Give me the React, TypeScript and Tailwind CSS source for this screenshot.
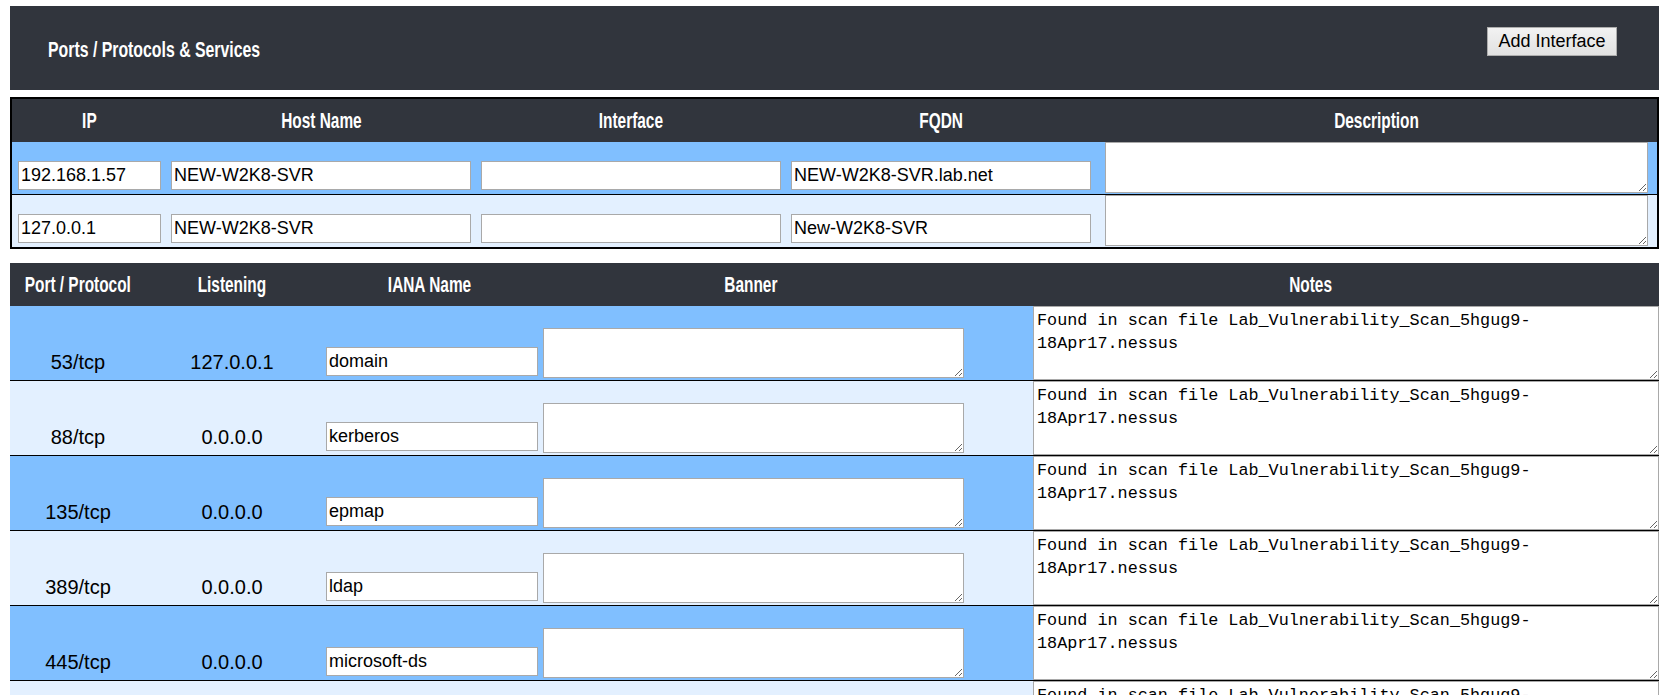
import React from "react";

const ARIAL = "font-['Liberation_Sans',Arial,sans-serif]";

const interfaces = [
  { ip: "192.168.1.57", host: "NEW-W2K8-SVR", iface: "", fqdn: "NEW-W2K8-SVR.lab.net" },
  { ip: "127.0.0.1", host: "NEW-W2K8-SVR", iface: "", fqdn: "New-W2K8-SVR" },
];

const ports = [
  { port: "53/tcp", listen: "127.0.0.1", iana: "domain" },
  { port: "88/tcp", listen: "0.0.0.0", iana: "kerberos" },
  { port: "135/tcp", listen: "0.0.0.0", iana: "epmap" },
  { port: "389/tcp", listen: "0.0.0.0", iana: "ldap" },
  { port: "445/tcp", listen: "0.0.0.0", iana: "microsoft-ds" },
  { port: "464/tcp", listen: "0.0.0.0", iana: "kpasswd" },
  { port: "593/tcp", listen: "0.0.0.0", iana: "http-rpc-epmap" },
];

const NOTE = "Found in scan file Lab_Vulnerability_Scan_5hgug9-\n18Apr17.nessus";

// condensed bold heading text (no narrow font installed, so squeeze Arial)
function Head({ children, className }: { children: React.ReactNode; className: string }) {
  return (
    <div className={`flex justify-center ${className}`}>
      <span className="inline-block shrink-0 scale-x-[0.7] whitespace-nowrap text-[22px] font-bold leading-[28px] text-white">
        {children}
      </span>
    </div>
  );
}

function TextInput({ value, className }: { value: string; className: string }) {
  return (
    <input
      defaultValue={value}
      className={`h-[29px] border border-[#a9a9a9] bg-white px-[2px] text-[18px] text-black outline-none ${ARIAL} ${className}`}
    />
  );
}

export default function App() {
  return (
    <div className={`min-h-screen bg-white pl-[10px] pr-[10px] pb-10 ${ARIAL}`}>
      {/* Title bar */}
      <div className="mt-[6px] flex h-[84px] items-start justify-between bg-[#31353d] pl-[38px] pr-[42px]">
        <h1 className="mt-[30px] inline-block origin-left scale-x-[0.72] whitespace-nowrap text-[22px] font-bold leading-[28px] text-white">
          Ports / Protocols &amp; Services
        </h1>
        <button className="mt-[21px] h-[29px] w-[130px] border border-[#adadad] bg-gradient-to-b from-[#f2f2f2] to-[#e1e1e1] text-[18px] text-black">
          Add Interface
        </button>
      </div>

      {/* Interfaces */}
      <div className="mt-[7px] border-2 border-black">
        <div className="flex h-[43px] items-center bg-[#31353d]">
          <Head className="w-[155px]">IP</Head>
          <Head className="w-[309px]">Host Name</Head>
          <Head className="w-[310px]">Interface</Head>
          <Head className="w-[310px]">FQDN</Head>
          <Head className="flex-1">Description</Head>
        </div>
        {interfaces.map((r, i) => (
          <div
            key={i}
            className={`flex h-[52px] items-end ${i % 2 === 0 ? "bg-[#80bfff]" : "bg-[#e3f0ff]"} ${
              i < interfaces.length - 1 ? "box-content border-b border-black" : ""
            }`}
          >
            <div className="w-[155px] pb-[4px]">
              <TextInput value={r.ip} className="ml-[6px] w-[143px]" />
            </div>
            <div className="w-[309px] pb-[4px]">
              <TextInput value={r.host} className="ml-[4px] w-[300px]" />
            </div>
            <div className="w-[310px] pb-[4px]">
              <TextInput value={r.iface} className="ml-[5px] w-[300px]" />
            </div>
            <div className="w-[310px] pb-[4px]">
              <TextInput value={r.fqdn} className="ml-[5px] w-[300px]" />
            </div>
            <div className="flex-1 self-start">
              <textarea className="ml-[9px] block h-[51px] w-[543px] border border-[#a9a9a9] bg-white" />
            </div>
          </div>
        ))}
      </div>

      {/* Ports */}
      <div className="mt-[14px]">
        <div className="flex h-[43px] items-center bg-[#31353d]">
          <Head className="w-[136px]">Port / Protocol</Head>
          <Head className="w-[172px]">Listening</Head>
          <Head className="w-[222px]">IANA Name</Head>
          <Head className="w-[422px]">Banner</Head>
          <Head className="flex-1">Notes</Head>
        </div>
        {ports.map((p, i) => (
          <div
            key={p.port}
            className={`box-content flex h-[74px] items-end border-b border-black ${
              i % 2 === 0 ? "bg-[#80bfff]" : "bg-[#e3f0ff]"
            }`}
          >
            <div className="w-[136px] pb-[6px] text-center text-[20px] leading-[24px] text-black">
              {p.port}
            </div>
            <div className="w-[172px] pb-[6px] text-center text-[20px] leading-[24px] text-black">
              {p.listen}
            </div>
            <div className="w-[222px] pb-[4px]">
              <TextInput value={p.iana} className="ml-[8px] w-[212px]" />
            </div>
            <div className="w-[422px] pb-[2px]">
              <textarea className="ml-[3px] block h-[50px] w-[421px] border border-[#a9a9a9] bg-white" />
            </div>
            <div className="flex flex-1 justify-end self-stretch">
              <textarea
                defaultValue={NOTE}
                className="block h-[74px] w-[626px] border border-[#a9a9a9] bg-white px-[3px] py-[2px] font-['Liberation_Mono',monospace] text-[16.8px] leading-[23px] text-black"
              />
            </div>
          </div>
        ))}
      </div>
    </div>
  );
}
